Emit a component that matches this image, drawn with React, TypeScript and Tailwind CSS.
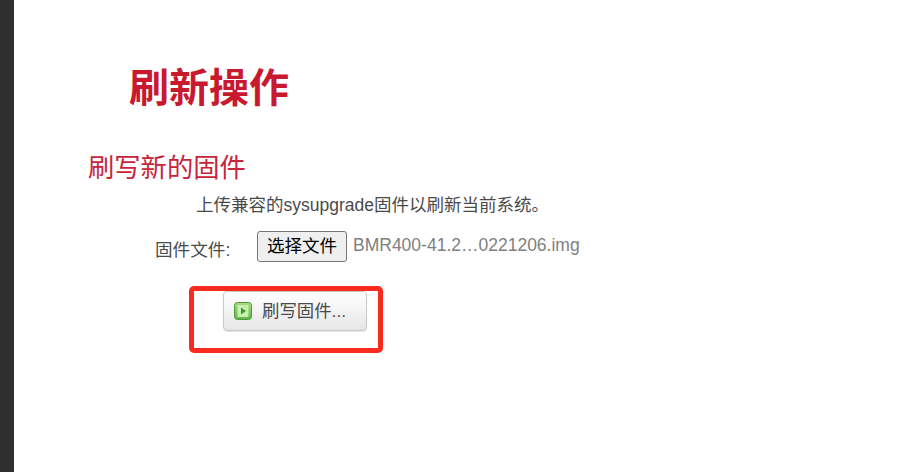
const cjk = "font-['Liberation_Sans','Noto_Sans_CJK_SC',sans-serif]";

function PlayIcon() {
  return (
    <svg width="18" height="18" viewBox="0 0 18 18" className="shrink-0">
      <defs>
        <linearGradient id="playBg" x1="0" y1="0" x2="0" y2="1">
          <stop offset="0" stopColor="#a9dc7c" />
          <stop offset="1" stopColor="#5fb548" />
        </linearGradient>
      </defs>
      <rect x="0.5" y="0.5" width="17" height="17" rx="3" fill="url(#playBg)" stroke="#4c9a3a" />
      <rect x="3.5" y="3" width="11" height="12" rx="1" fill="#c8eeb0" />
      <path d="M7 5.5 L12 9 L7 12.5 Z" fill="#3f9a35" />
    </svg>
  );
}

export default function App() {
  return (
    <div className={`flex h-[472px] w-[918px] overflow-hidden bg-white ${cjk}`}>
      {/* dark edge of the window */}
      <div className="w-[14px] shrink-0 bg-[#2f2f2f]" />

      <div className="flex-1 pl-[74px]">
        <h1 className="ml-[41px] mt-[65px] text-[40px] font-bold leading-[46px] text-[#c9192e]">刷新操作</h1>

        <h2 className="mt-[41px] text-[26.3px] font-normal leading-[32px] text-[#c9243a]">刷写新的固件</h2>

        <p className="ml-[108px] mt-[9px] text-[17.5px] leading-[24px] text-[#4a4a4a]">
          上传兼容的sysupgrade固件以刷新当前系统。
        </p>

        <div className="ml-[67px] mt-[14px] flex items-start">
          <span className="mt-[7px] w-[102px] text-[17.6px] leading-[24px] text-[#4a4a4a]">固件文件:</span>
          <span className="flex h-[31px] w-[90px] items-center justify-center rounded-[3px] border border-[#767676] bg-[#efefef] text-[17.5px] text-black">
            选择文件
          </span>
          <span className="ml-[6px] mt-[2px] text-[17.5px] leading-[24px] text-[#808080]">BMR400-41.2…0221206.img</span>
        </div>

        {/* red box drawn over the screenshot */}
        <div className="ml-[101px] mt-[24px] h-[67px] w-[194px] rounded-[5px] border-[5px] border-[#fb2a1e] pl-[29px]">
          <div className="flex h-[40px] w-[144px] items-center gap-[10px] rounded-[4px] border border-[#c8c8c8] bg-gradient-to-b from-white to-[#e6e6e6] pl-[10px] shadow-[0_1px_1px_rgba(0,0,0,0.1)]">
            <PlayIcon />
            <span className="text-[17.4px] text-[#4a4a4a]">刷写固件...</span>
          </div>
        </div>
      </div>
    </div>
  );
}
